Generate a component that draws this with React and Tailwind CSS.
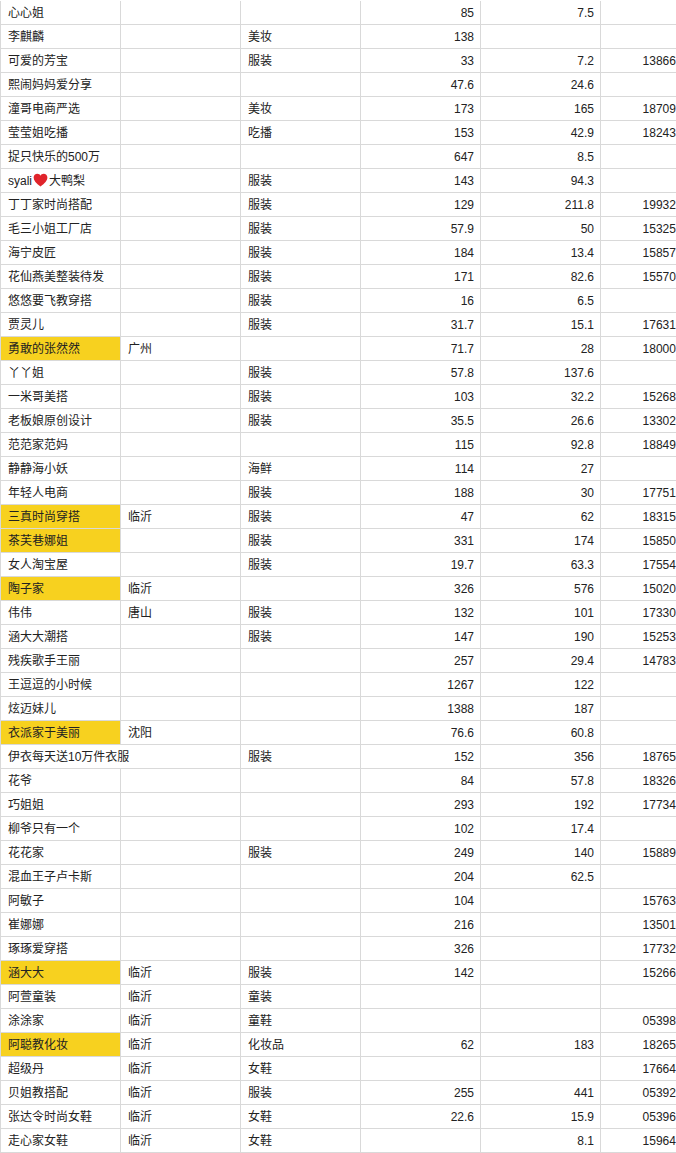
import React from "react";

const rows = [
  ["心心姐", "", "", "85", "7.5", ""],
  ["李麒麟", "", "美妆", "138", "", ""],
  ["可爱的芳宝", "", "服装", "33", "7.2", "13866270415"],
  ["熙闹妈妈爱分享", "", "", "47.6", "24.6", ""],
  ["潼哥电商严选", "", "美妆", "173", "165", "18709382216"],
  ["莹莹姐吃播", "", "吃播", "153", "42.9", "18243105598"],
  ["捉只快乐的500万", "", "", "647", "8.5", ""],
  ["HEART", "", "服装", "143", "94.3", ""],
  ["丁丁家时尚搭配", "", "服装", "129", "211.8", "19932650147"],
  ["毛三小姐工厂店", "", "服装", "57.9", "50", "15325841260"],
  ["海宁皮匠", "", "服装", "184", "13.4", "15857390214"],
  ["花仙燕美整装待发", "", "服装", "171", "82.6", "15570428831"],
  ["悠悠要飞教穿搭", "", "服装", "16", "6.5", ""],
  ["贾灵儿", "", "服装", "31.7", "15.1", "17631904452"],
  ["勇敢的张然然", "广州", "", "71.7", "28", "18000736621", true],
  ["丫丫姐", "", "服装", "57.8", "137.6", ""],
  ["一米哥美搭", "", "服装", "103", "32.2", "15268803315"],
  ["老板娘原创设计", "", "服装", "35.5", "26.6", "13302471968"],
  ["范范家范妈", "", "", "115", "92.8", "18849265017"],
  ["静静海小妖", "", "海鲜", "114", "27", ""],
  ["年轻人电商", "", "服装", "188", "30", "17751240936"],
  ["三真时尚穿搭", "临沂", "服装", "47", "62", "18315927740", true],
  ["茶芙巷娜姐", "", "服装", "331", "174", "15850967213", true],
  ["女人淘宝屋", "", "服装", "19.7", "63.3", "17554082319"],
  ["陶子家", "临沂", "", "326", "576", "15020631874", true],
  ["伟伟", "唐山", "服装", "132", "101", "17330158426"],
  ["涵大大潮搭", "", "服装", "147", "190", "15253907641"],
  ["残疾歌手王丽", "", "", "257", "29.4", "14783620159"],
  ["王逗逗的小时候", "", "", "1267", "122", ""],
  ["炫迈妹儿", "", "", "1388", "187", ""],
  ["衣派家于美丽", "沈阳", "", "76.6", "60.8", "", true],
  ["伊衣每天送10万件衣服", "SPAN", "服装", "152", "356", "18765420983"],
  ["花爷", "", "", "84", "57.8", "18326714590"],
  ["巧姐姐", "", "", "293", "192", "17734208816"],
  ["柳爷只有一个", "", "", "102", "17.4", ""],
  ["花花家", "", "服装", "249", "140", "15889362047"],
  ["混血王子卢卡斯", "", "", "204", "62.5", ""],
  ["阿敏子", "", "", "104", "", "15763918205"],
  ["崔娜娜", "", "", "216", "", "13501487632"],
  ["琢琢爱穿搭", "", "", "326", "", "17732560418"],
  ["涵大大", "临沂", "服装", "142", "", "15266093741", true],
  ["阿萱童装", "临沂", "童装", "", "", ""],
  ["涂涂家", "临沂", "童鞋", "", "", "05398216574"],
  ["阿聪教化妆", "临沂", "化妆品", "62", "183", "18265430917", true],
  ["超级丹", "临沂", "女鞋", "", "", "17664218350"],
  ["贝姐教搭配", "临沂", "服装", "255", "441", "05392876153"],
  ["张达令时尚女鞋", "临沂", "女鞋", "22.6", "15.9", "05396142087"],
  ["走心家女鞋", "临沂", "女鞋", "", "8.1", "15964302718"],
];

function Heart() {
  return (
    <svg width="15" height="14" viewBox="0 0 24 22" className="inline-block mx-[1px] -mt-[2px]">
      <path
        d="M12 21.5 C5 16 1 12 1 7 C1 3.5 3.7 1 7 1 C9.2 1 11 2.2 12 4 C13 2.2 14.8 1 17 1 C20.3 1 23 3.5 23 7 C23 12 19 16 12 21.5 Z"
        fill="#e0242b"
      />
    </svg>
  );
}

function TextCell({ children, yellow, wide }) {
  return (
    <div
      className={`${wide ? "w-[240px]" : "w-[120px]"} shrink-0 h-[24px] border-r border-b border-[#d9d9d9] pl-[7px] flex items-center overflow-hidden whitespace-nowrap ${
        yellow ? "bg-[#f7d11f]" : "bg-white"
      }`}
    >
      {children}
    </div>
  );
}

function NumCell({ children, last }) {
  return (
    <div
      className={`w-[120px] shrink-0 h-[24px] border-r border-b border-[#d9d9d9] ${
        last ? "pr-[4px]" : "pr-[6px]"
      } flex items-center justify-end overflow-hidden whitespace-nowrap`}
    >
      {children}
    </div>
  );
}

export default function App() {
  return (
    <div
      className="w-[676px] h-[1153px] overflow-hidden bg-white text-[12px] text-[#222222] pt-[1px]"
      style={{ fontFamily: '"Liberation Sans", "Noto Sans CJK SC", sans-serif' }}
    >
      <div className="w-[721px] border-l border-[#d9d9d9]">
        {rows.map((r, i) => (
          <div key={i} className="flex">
            <TextCell yellow={r[6]} wide={r[1] === "SPAN"}>
              {r[0] === "HEART" ? (
                <span>
                  syali
                  <Heart />
                  大鸭梨
                </span>
              ) : (
                r[0]
              )}
            </TextCell>
            {r[1] !== "SPAN" && <TextCell>{r[1]}</TextCell>}
            <TextCell>{r[2]}</TextCell>
            <NumCell>{r[3]}</NumCell>
            <NumCell>{r[4]}</NumCell>
            <NumCell last>{r[5]}</NumCell>
          </div>
        ))}
      </div>
    </div>
  );
}
